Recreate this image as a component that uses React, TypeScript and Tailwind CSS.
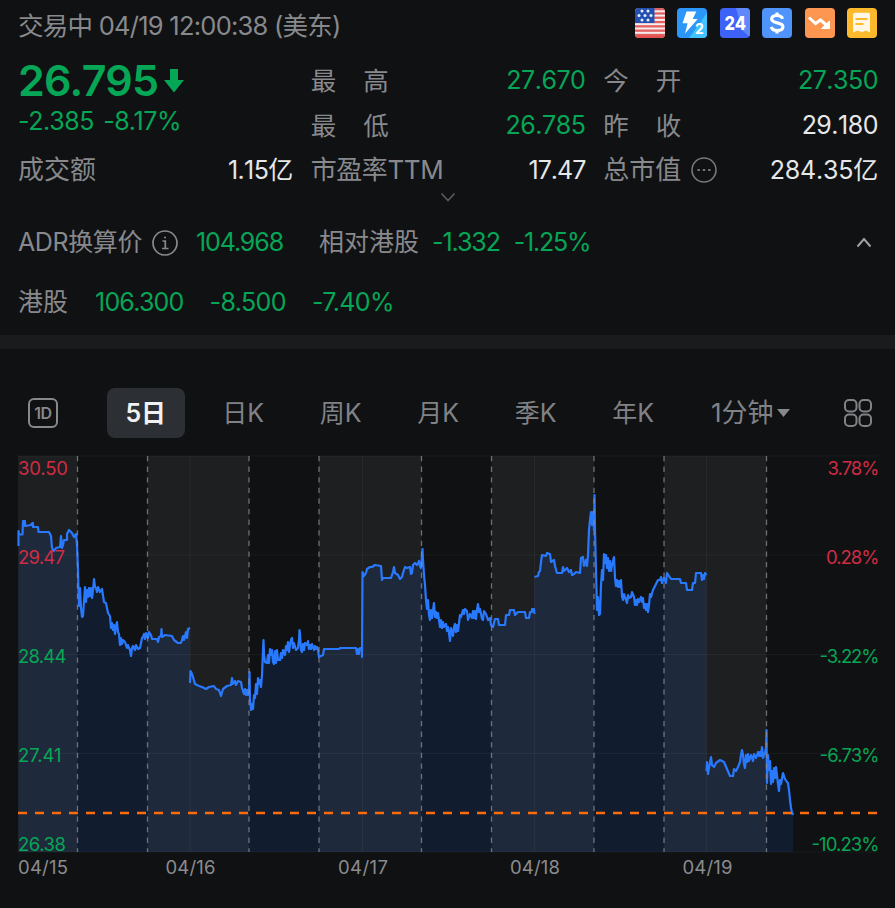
import clsx from "clsx"

const stats = [
  [
    { label: "最高", value: "27.670", color: "text-[#06a657]" },
    { label: "最低", value: "26.785", color: "text-[#06a657]" },
  ],
  [
    { label: "今开", value: "27.350", color: "text-[#06a657]" },
    { label: "昨收", value: "29.180", color: "text-[#e6e7e8]" },
  ],
]

const tabs = ["5日", "日K", "周K", "月K", "季K", "年K"]

// Chart space: x 18-878, y 456-852
const BOTTOM = 852

const sessions = [
  "18.5,546 18.5,531 19,534.5 22.5,534.5 23,521 25,521 25,526 31,525 31.5,524 33,523 33,527 38,527 38.5,532 49,532 51,536 52,548 54,551 56,548 60,547 61,536 62,548 63,545 64,540 67,540 67,534 69,530 71,532 72,533 74,537 76,534 77,545 78,570 78.5,590 79,606 80,588 81,608 82,617 83,616 84,601 85,587 86,602 87,590 88,597 89,588 90,596 91,588 92,598 93,590 94,579 95,587 96,588 97,592 98,587 100,592 102,589 104,602 106,603 108,613 110,616 111,628 112,623 113,630 114,625 115,634 116,626 117,622 118,632 119,634 120,645 121,638 122,644 123,640 125,642 127,648 128,645 129,648 130,650 131,656 132,648 133,646 135,650 136,645 138,649 140,648 142,638 143,637 144,634 145,639 146,633 148,638 149,632 151,635 152,639 157,639 158,642 159,637 161,636 161.5,629 162,637 165,635 172,636 174,640 178,643 181,643 182,640 183,636 184,640 186,632 187,638 188,629 190,628",
  "190,683 190.5,671 192,674 193,677 195,684 199,686 202,687 206,689 209,687 214,686 216,689 219,690 221,696 223,689 227,686 231,685 232,678 233,684 235,681 236,685 238,681 241,682 242,688 244,694 245,689 246,695 247,690 248,695 249,688 249.5,672 250,700 251,710 252,704 253,709 254,695 255,698 256,684 257,694 258,678 259,684 260,680 261,687 262,675 263,650 263.5,640 264,655 265,662 267,663 268,655 269,663 270,649 271,655 272,650 273,662 274,664 275,651 276,663 277,650 278,660 280,660 281,653 282,658 283,650 285,655 286,646 287,650 288,642 289,652 290,645 291,640 292,638 293,648 294,643 296,650 298,648 299,640 299.5,630 300,634 301,650 302,652 303,644 304,650 305,643 307,645 308,641 309,649 310,645 311,649 312,644 314,650 315,646 316,649 317,647 318,650 319,657 323,655 324,649 339,649 340,648 356,648 357,654 358,649 359,654 360,648 362,648 362,657 362.5,572 364,576 366,573 367,569 370,567 372,567 375,565 381,566 382,580 383,578 391,578 393,572 394,567 395,573 398,575 400,579 402,577 403,573 405,567 407,568 410,567 411,574 412,573 413,565 415,563 417,565 419,561 420,566 421,568 422.5,549 423,560 424,575 425,585 426,600 427,609 428,600 429,615 430,620 431,610 432,618 434,603 435,617 436,612 437,618 438,613 440,627 441,620 442,628 443,622 444,627 446,624 447,631 448,627 449,633 450,641 451,628 453,636 454,627 455,624 456,632 457,625 458,631 460,615 461,617 463,610 464,614 465,609 467,611 468,620 470,614 472,618 473,611 474,618 475,611 476,619 477,610 478,604 479,612 480,609 482,619 483,620 484,611 486,614 488,620 490,618 491,625 493,627 495,619 498,619 499,625 505,625 506,615 509,615 510,610 514,610 515,615 518,612 525,612 526,618 529,618 530,612 532,612 532,609 534,609 534.5,614",
  "534.5,577 538,576 539,572 540,571 541,562 542,555 546,556 547,553 550,554 551,562 554,560 555,566 557,573 562,573 563,567 564,571 567,568 569,572 571,570 572,575 574,574 576,572 580,573 581,558 583,557 584,566 586,560 587,566 588,555 589,530 590,520 591,512 592,525 593,512 594,530 594.5,495 595,530 596,570 597,610 598,597 599,615 600,614 601,585 602,570 603,580 604,554 605,563 606,555 607,568 608,558 609,571 610,561 611,571 612,565 614,557 615,578 616,586 617,580 618,587 619,581 620,587 621,580 622,596 623,600 624,594 626,600 627,603 628,595 629,598 631,597 632,592 634,597 635,605 636,600 637,605 638,599 639,602 641,597 642,602 643,598 644,608 645,604 646,610 647,604 648,612 649,605 650,594 651,597 653,590 655,586 658,580 660,580 661,577 662,583 664,578 666,583 667,573 669,576 671,579 680,579 681,583 686,583 687,590 692,590 693,583 695,583 696,573 701,573 702,580 703,575 704,579 705,573 706.5,575",
  "706.5,771 707,762 708,774 709,768 711,757 712,765 714,767 716,763 720,760 724,762 727,769 730,776 733,776 734,769 736,771 738,767 740,762 741,755 742,750 743,755 744,764 745,768 746,755 747,762 748,754 749,761 751,755 753,761 754,754 756,758 758,752 759,756 760,752 761,756 762,747 763,758 765,752 766,748 766.5,730 767,783 768,755 769,770 770,761 771,784 772,771 773,782 774,768 775,778 776,767 778,784 779,791 780,780 781,784 783,773 785,779 787,782 788,783 789,790 790,800 791,808 792,812 793,815",
]

const extended = [
  [18, 77.5],
  [147.5, 249],
  [319, 421.5],
  [491.5, 594],
  [664, 766.5],
]
const dashed = [77.5, 147.5, 249, 319, 421.5, 491.5, 594, 664, 766.5]
const days = [190, 362.5, 534.5, 706.5]
const rows = [456, 555, 654.5, 753.5, 852]

const axis = [
  { price: "30.50", pct: "3.78%", y: 475, pw: 49, cw: 52, color: "#d02c45" },
  { price: "29.47", pct: "0.28%", y: 564, pw: 46, cw: 53.5, color: "#d02c45" },
  { price: "28.44", pct: "-3.22%", y: 663, pw: 47.5, cw: 60, color: "#06a657" },
  { price: "27.41", pct: "-6.73%", y: 762, pw: 42.5, cw: 60, color: "#06a657" },
  { price: "26.38", pct: "-10.23%", y: 851, pw: 47, cw: 68, color: "#06a657" },
]

const dates = [
  { text: "04/15", x: 18 },
  { text: "04/16", x: 165.5 },
  { text: "04/17", x: 338 },
  { text: "04/18", x: 510 },
  { text: "04/19", x: 682.5 },
]

function areaPoints(points: string) {
  const list = points.split(" ")
  const first = list[0].split(",")[0]
  const last = list[list.length - 1].split(",")[0]
  return `${first},${BOTTOM} ${points} ${last},${BOTTOM}`
}

function Badges() {
  return (
    <div className="flex gap-[12.4px]">
      <svg width="30" height="30" viewBox="0 0 30 30">
        <clipPath id="flag">
          <rect width="30" height="30" rx="4" />
        </clipPath>
        <g clipPath="url(#flag)">
          <rect width="30" height="30" fill="#f4eeee" />
          {[0, 4.3, 8.6, 12.9, 17.2, 21.5, 25.8].map((y) => (
            <rect key={y} y={y} width="30" height="2.3" fill="#e2605f" />
          ))}
          <rect y="27.6" width="30" height="3" fill="#e2504f" />
          <rect width="19.5" height="15" fill="#2450b0" />
          {[
            [7, 3], [13, 3], [4, 7.5], [10, 7.5], [16, 7.5], [7, 12], [13, 12],
          ].map(([x, y]) => (
            <circle key={`${x}-${y}`} cx={x} cy={y} r="1.5" fill="#e8eefa" />
          ))}
        </g>
      </svg>
      <svg width="30" height="30" viewBox="0 0 30 30">
        <rect width="30" height="30" rx="4" fill="#2b97fb" />
        <path d="M30 5v21a4 4 0 0 1-4 4H12z" fill="#42c3fb" />
        <path d="M9.5 3.5h9.8l-3.6 7.6h5L8 25.5l2.6-10.3H5.5z" fill="#fff" />
        <text x="18" y="26" fontSize="14" fontWeight="700" fill="#fff">2</text>
      </svg>
      <svg width="30" height="30" viewBox="0 0 30 30">
        <rect width="30" height="30" rx="4" fill="#3d62f8" />
        <path d="M16 0h10a4 4 0 0 1 4 4v22a4 4 0 0 1-1 2.6L22 22z" fill="#5f88fb" />
        <text x="4.500" y="21.800" fontSize="19" fontWeight="800" fill="#fff" textLength="21.500" lengthAdjust="spacingAndGlyphs">24</text>
      </svg>
      <svg width="30" height="30" viewBox="0 0 30 30">
        <rect width="30" height="30" rx="4" fill="#4e94fb" />
        <path
          d="M20.5 10.8c-.5-2-2.5-3.300-5.500-3.300-3.200 0-5.300 1.300-5.300 3.600 0 5.200 11.200 2.400 11.200 7.600 0 2.500-2.400 3.800-5.700 3.800-3.200 0-5.400-1.400-5.900-3.600M15 4.500v3M15 22.500v3"
          fill="none"
          stroke="#fff"
          strokeWidth="3.200"
        />
      </svg>
      <svg width="30" height="30" viewBox="0 0 30 30">
        <rect width="30" height="30" rx="4" fill="#fd9650" />
        <path d="M4 9.500l6.500 6 5-3.500 6.500 5.500" fill="none" stroke="#fff" strokeWidth="3" />
        <path d="M24.500 13v7.500h-8z" fill="#fff" stroke="#fff" strokeLinejoin="round" />
      </svg>
      <svg width="30" height="30" viewBox="0 0 30 30">
        <rect width="30" height="30" rx="4" fill="#fcb92c" />
        <path d="M8 4.800h13a2 2 0 0 1 2 2V24.500l-4-2-4 1.800-4.500-1.800-4.500 2V6.800a2 2 0 0 1 2-2z" fill="#fff6e4" />
        <path d="M8.500 11h12M8.500 16h8" stroke="#fcb92c" strokeWidth="2.200" />
      </svg>
    </div>
  )
}

function Chart() {
  return (
    <svg width="895" height="453" viewBox="0 455 895 453" className="block">
      {extended.map(([a, b]) => (
        <rect key={a} x={a} y="456" width={b - a} height="396" fill="#1e1f20" />
      ))}
      {sessions.map((s, i) => (
        <polygon key={i} points={areaPoints(s)} fill="#2277ff" fillOpacity="0.12" />
      ))}
      {rows.map((y) => (
        <line key={y} x1="18" x2="878" y1={y} y2={y} stroke="#fff" strokeOpacity="0.045" />
      ))}
      {days.map((x) => (
        <line key={x} x1={x} x2={x} y1="456" y2="852" stroke="#fff" strokeOpacity="0.045" />
      ))}
      {sessions.map((s, i) => (
        <polyline key={i} points={s} fill="none" stroke="#2979ff" strokeWidth="2.2" strokeLinejoin="round" />
      ))}
      {dashed.map((x) => (
        <line key={x} x1={x} x2={x} y1="456" y2="852" stroke="#8b8e92" strokeOpacity="0.75" strokeWidth="1.3" strokeDasharray="5.3 5.3" />
      ))}
      <line x1="18" x2="877" y1="813" y2="813" stroke="#fb6d0c" strokeWidth="2.6" strokeDasharray="9 8" />

      {axis.map((a) => (
        <g key={a.price} fill={a.color} fontSize="18.5">
          <text x="18" y={a.y} textLength={a.pw + 1}>{a.price}</text>
          <text x={879.5 - a.cw} y={a.y} textLength={a.cw}>{a.pct}</text>
        </g>
      ))}
      {dates.map((d) => (
        <text key={d.text} x={d.x} y="874" fontSize="18.5" fill="#8b8c8f" textLength="50">
          {d.text}
        </text>
      ))}
    </svg>
  )
}

export default function App() {
  return (
    <div className="flex h-[908px] w-[895px] flex-col overflow-hidden bg-[#101113] font-['Inter','Noto_Sans_CJK_SC',sans-serif] text-[25px] leading-none font-normal whitespace-nowrap text-[#88898c]">
      <header className="flex h-[58px] items-start justify-between px-[18px]">
        <div className="flex h-[52px] items-center text-[25.5px] tracking-[-0.75px]">交易中 04/19 12:00:38 (美东)</div>
        <div className="pt-[7.5px]">
          <Badges />
        </div>
      </header>

      <section className="grid h-[134px] grid-cols-3 gap-x-[18px] pr-[17px] pl-[18px]">
        <div>
          <div className="flex h-[45px] items-center gap-[5px] text-[43px] font-semibold tracking-[-0.7px] text-[#06a657]">
            26.795
            <svg width="22" height="26" viewBox="0 0 22 26" fill="currentColor">
              <path d="M7 1h8v11h6L11 24.5 1 12h6z" />
            </svg>
          </div>
          <div className="flex h-[36px] items-center gap-[9px] tracking-[-0.4px] text-[#06a657]">
            <span>-2.385</span>
            <span>-8.17%</span>
          </div>
        </div>
        {stats.map((col, i) => (
          <div key={i}>
            {col.map((item) => (
              <div key={item.label} className="flex h-[45px] items-center justify-between">
                <span className="flex gap-[27px] text-[25.5px]">
                  <span>{item.label[0]}</span>
                  <span>{item.label[1]}</span>
                </span>
                <span className={clsx("tracking-[-0.5px] [font-kerning:none]", item.color)}>{item.value}</span>
              </div>
            ))}
          </div>
        ))}
        <div className="flex h-[44px] items-center justify-between">
          <span className="text-[26px]">成交额</span>
          <span className="tracking-[-0.6px] text-[#e6e7e8] [font-kerning:none]">1.15亿</span>
        </div>
        <div className="flex h-[44px] items-center justify-between">
          <span className="text-[26px] tracking-[-0.4px]">市盈率TTM</span>
          <span className="tracking-[-1px] text-[#e6e7e8] [font-kerning:none]">17.47</span>
        </div>
        <div className="flex h-[44px] items-center">
          <span className="text-[26px]">总市值</span>
          <svg width="26" height="26" viewBox="0 0 26 26" className="ml-[10px]" fill="none" stroke="#77787b" strokeWidth="1.6">
            <circle cx="13" cy="13" r="12" />
            <path d="M6.5 13h2.4M11.800 13h2.400M17.100 13h2.400" strokeWidth="2.2" />
          </svg>
          <span className="ml-auto tracking-[-0.2px] text-[#e6e7e8] [font-kerning:none]">284.35亿</span>
        </div>
      </section>

      <div className="flex h-[20px] justify-center">
        <svg width="16" height="10" viewBox="0 0 16 10" fill="none" stroke="#55575a" strokeWidth="1.8">
          <path d="M1.5 1.5L8 8.5l6.500-7" />
        </svg>
      </div>

      <section className="flex h-[123px] flex-col pr-[23px] pl-[18px]">
        <div className="flex h-[60px] items-center pt-px">
          <span className="tracking-[-0.4px]">ADR换算价</span>
          <svg width="26" height="26" viewBox="0 0 26 26" className="ml-[10px]" fill="none" stroke="#88898c" strokeWidth="1.7">
            <circle cx="13" cy="13" r="12" />
            <path d="M10.5 11h2.8v7.500M10 18.500h6.500M12 7.500h2" />
          </svg>
          <span className="ml-[18px] tracking-[-1.1px] text-[#06a657]">104.968</span>
          <span className="ml-[36px]">相对港股</span>
          <span className="ml-[13px] tracking-[-1.1px] text-[#06a657]">-1.332</span>
          <span className="ml-[14px] tracking-[-1.2px] text-[#06a657]">-1.25%</span>
          <svg width="16" height="11" viewBox="0 0 16 11" className="ml-auto" fill="none" stroke="#a0a1a3" strokeWidth="2">
            <path d="M1.5 9.5L8 2l6.500 7.500" />
          </svg>
        </div>
        <div className="flex h-[60px] items-center">
          <span>港股</span>
          <span className="ml-[27px] tracking-[-0.8px] text-[#06a657]">106.300</span>
          <span className="ml-[26px] tracking-[-0.6px] text-[#06a657]">-8.500</span>
          <span className="ml-[26px] tracking-[-0.6px] text-[#06a657]">-7.40%</span>
        </div>
      </section>

      <div className="h-[14px] shrink-0 bg-[#1a1b1d]" />

      <nav className="flex h-[106px] shrink-0 items-center pt-[22px] pl-[28px]">
        <div className="flex size-[30px] items-center justify-center rounded-[6px] border-2 border-[#88898c] text-[16px] font-semibold tracking-[-0.3px]">
          1D
        </div>
        <div className="ml-[39px] grid w-[585px] grid-cols-6">
          {tabs.map((tab, i) => (
            <div key={tab} className="flex justify-center">
              <div
                className={clsx(
                  "flex h-[50px] items-center justify-center rounded-lg pt-px",
                  i === 0 ? "w-[78px] bg-[#2c2f34] font-semibold text-[#f0f1f2]" : "text-[#808286]"
                )}
              >
                {tab}
              </div>
            </div>
          ))}
        </div>
        <div className="ml-[29px] flex w-[133px] items-center text-[26px] text-[#808286]">
          1分钟
          <svg width="13" height="8" viewBox="0 0 13 8" className="ml-[3px]" fill="#88898c">
            <path d="M0 0h13L6.500 8z" />
          </svg>
        </div>
        <svg width="28" height="28" viewBox="0 0 28 28" fill="none" stroke="#808286" strokeWidth="2">
          <rect x="1" y="1" width="11.5" height="11.5" rx="4" />
          <rect x="15.5" y="1" width="11.5" height="11.5" rx="4" />
          <rect x="1" y="15.5" width="11.5" height="11.5" rx="4" />
          <rect x="15.5" y="15.5" width="11.5" height="11.5" rx="4" />
        </svg>
      </nav>

      <Chart />
    </div>
  )
}
